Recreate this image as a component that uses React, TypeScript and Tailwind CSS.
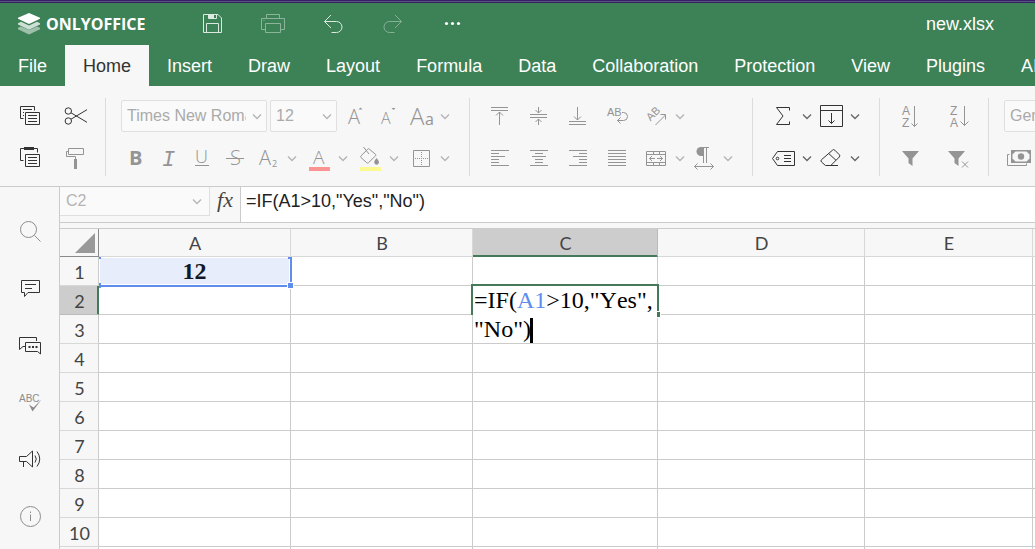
import type {ReactNode} from 'react'
import clsx from 'clsx'

const tabs = [
  'File',
  'Home',
  'Insert',
  'Draw',
  'Layout',
  'Formula',
  'Data',
  'Collaboration',
  'Protection',
  'View',
  'Plugins',
  'AI',
]

const columns = [
  {name: 'A', width: 'w-[192px]'},
  {name: 'B', width: 'w-[182px]'},
  {name: 'C', width: 'w-[185px]'},
  {name: 'D', width: 'w-[207px]'},
  {name: 'E', width: 'w-[168px]'},
  {name: 'F', width: ''},
]

const rows = [1, 2, 3, 4, 5, 6, 7, 8, 9, 10, 11]

type IconProps = {children: ReactNode; className?: string}

function Icon({children, className}: IconProps) {
  return (
    <svg
      viewBox="0 0 24 24"
      fill="none"
      stroke="currentColor"
      aria-hidden="true"
      className={clsx('block size-6 shrink-0 overflow-visible', className)}
    >
      {children}
    </svg>
  )
}

type GlyphProps = {
  x: number
  y: number
  size: number
  weight?: number
  font?: string
  children: string
}

function Glyph({x, y, size, weight = 300, font = 'Open Sans', children}: GlyphProps) {
  return (
    <text
      x={x}
      y={y}
      fontSize={size}
      fontWeight={weight}
      fontFamily={`"${font}", sans-serif`}
      fill="currentColor"
      stroke="none"
    >
      {children}
    </text>
  )
}

function Chevron({className}: {className?: string}) {
  return (
    <svg
      viewBox="0 0 12 12"
      fill="none"
      stroke="currentColor"
      strokeWidth="1.3"
      aria-hidden="true"
      className={clsx('block size-3 shrink-0', className)}
    >
      <path d="M2 4.5l4 4 4-4" />
    </svg>
  )
}

type ToolProps = {label: string; children: ReactNode; active?: boolean; menu?: boolean}

function Tool({label, children, active, menu}: ToolProps) {
  return (
    <button
      type="button"
      aria-label={label}
      title={label}
      className={clsx('flex shrink-0 items-center gap-1.5', active ? 'text-[#333]' : 'text-[#949494]')}
    >
      <Icon>{children}</Icon>
      {menu && <Chevron className={active ? 'text-[#666]' : 'text-[#b4b4b4]'} />}
    </button>
  )
}

function Group({children, className}: IconProps) {
  return (
    <div
      className={clsx(
        'flex h-[78px] shrink-0 flex-col justify-between border-r border-[#dcdcdc]',
        className,
      )}
    >
      {children}
    </div>
  )
}

function Row({children, className}: IconProps) {
  return <div className={clsx('flex h-9 items-center', className)}>{children}</div>
}

type ComboProps = {label: string; value: string; className: string}

function Combo({label, value, className}: ComboProps) {
  return (
    <div className={clsx('relative shrink-0', className)}>
      <select
        aria-label={label}
        defaultValue={value}
        className="h-8 w-full appearance-none rounded-xs border border-[#dfdfdf] bg-[#fafafa] pr-5 pl-[5px] text-base text-[#aaa]"
      >
        <option>{value}</option>
      </select>
      <Chevron className="absolute top-2.5 right-1 text-[#b4b4b4]" />
    </div>
  )
}

function AlignLines({lines}: {lines: [number, number][]}) {
  return (
    <>
      {lines.map(([from, to], i) => (
        <path key={i} d={`M${from} ${4.5 + i * 3}H${to}`} />
      ))}
    </>
  )
}

function Header() {
  return (
    <header className="shrink-0 bg-[#3d8157] font-['Liberation_Sans',Arial,sans-serif] text-lg text-white">
      <div className="h-[3px] border-y border-[#33245f] bg-[#5d4f8c]" />
      <div className="flex h-[42px] items-center pr-[41px] pl-[18px]">
        <div className="flex w-[183px] items-center gap-1.5">
          <svg viewBox="0 0 22 22" fill="white" aria-hidden="true" className="size-[22px]">
            <path d="M0 14.8l3-1.400 8 3.600 8-3.600 3 1.400v1.400L11 21.600 0 16.200z" opacity=".5" />
            <path d="M0 10.200L3 8.800l8 3.600 8-3.600 3 1.400v1.400l-11 5.200L0 11.600z" opacity=".75" />
            <path d="M11 0l11 4.800v1L11 11 0 5.800v-1z" />
          </svg>
          <span className="font-['Open_Sans',sans-serif] text-base font-bold">ONLYOFFICE</span>
        </div>
        <div className="flex gap-9">
          <button type="button" aria-label="Save">
            <Icon className="text-[#dbe9e0]">
              <path d="M2.5 2.5h14.5l3.5 3.5v14.5h-18z" />
              <path d="M7.5 2.5v4h8v-4M5.5 20.5v-9h12v9" />
              <path d="M8 2.5h5v3.5H8z" fill="currentColor" stroke="none" />
            </Icon>
          </button>
          <button type="button" aria-label="Print">
            <Icon className="text-[#8ab59a]">
              <path d="M5.5 6.5v-4h13v4M4.5 17.5h-4v-11h23v11h-4" />
              <path d="M4.5 11.5h15v9h-15zM2.5 8.5h1" />
            </Icon>
          </button>
          <button type="button" aria-label="Undo">
            <Icon className="text-[#dbe9e0]">
              <path d="M10 3L3.5 9.5 10 16M3.5 9.5h12a5.5 5.5 0 0 1 0 11h-5" />
            </Icon>
          </button>
          <button type="button" aria-label="Redo">
            <Icon className="text-[#85b196]">
              <path d="M14 3l6.5 6.5L14 16M20.5 9.5h-12a5.5 5.5 0 0 0 0 11h5" />
            </Icon>
          </button>
          <button type="button" aria-label="Customize quick access">
            <Icon>
              <g fill="currentColor" stroke="none">
                <circle cx="5.5" cy="11.5" r="1.6" />
                <circle cx="11.5" cy="11.5" r="1.6" />
                <circle cx="17.5" cy="11.5" r="1.6" />
              </g>
            </Icon>
          </button>
        </div>
        <span className="ml-auto">new.xlsx</span>
      </div>
      <nav className="flex h-[41px] overflow-hidden">
        {tabs.map((tab) => (
          <button
            key={tab}
            type="button"
            className={clsx('shrink-0 px-[18px]', tab === 'Home' && 'bg-[#f7f7f7] text-[#333]')}
          >
            {tab}
          </button>
        ))}
      </nav>
    </header>
  )
}

function Toolbar() {
  return (
    <div className="flex shrink-0 overflow-hidden border-b border-[#cbcbcb] bg-[#f7f7f7] pt-3 pb-2.5 font-['Liberation_Sans',Arial,sans-serif]">
      <Group className="pr-[17px] pl-[18px]">
        <Row className="gap-[22px]">
          <Tool label="Copy" active>
            <path d="M5.5 14.5h-3v-12h14v4M5 5.5h9M5 8.5h1M5 11.5h1M7.5 8.5h14v12h-14zM10 11.5h9M10 14.5h9M10 17.5h9" />
          </Tool>
          <Tool label="Cut" active>
            <circle cx="4.3" cy="7" r="3.2" />
            <circle cx="4.3" cy="17" r="3.2" />
            <path d="M7 8.8l16 9.5M7 15.2l16-9.5" />
          </Tool>
        </Row>
        <Row className="gap-[22px]">
          <Tool label="Paste" active>
            <path d="M5.5 14.5h-3v-12h17v4M7.5 8.5h14v12h-14zM10 11.5h9M10 14.5h9M10 17.5h9" />
            <path d="M6 1h10v3H6z" fill="currentColor" stroke="none" />
          </Tool>
          <Tool label="Copy style">
            <path d="M4.5 2.5h15v6h-15zM4.5 5.5h-2v5h9V13" />
            <path d="M10 13h3v10h-3z" fill="currentColor" stroke="none" />
          </Tool>
        </Row>
      </Group>

      <Group className="pr-[18px] pl-[15px]">
        <Row>
          <Combo label="Font" value="Times New Roman" className="w-[146px]" />
          <Combo label="Font size" value="12" className="ml-[3px] w-[67px]" />
          <div className="ml-1.5 flex gap-[9px]">
            <Tool label="Increment font size">
              <Glyph x={5} y={20} size={20}>A</Glyph>
              <path d="M15.5 5.5l2-2 2 2z" fill="currentColor" stroke="none" />
            </Tool>
            <Tool label="Decrement font size">
              <Glyph x={5} y={20} size={16}>A</Glyph>
              <path d="M15.5 4l2 2 2-2z" fill="currentColor" stroke="none" />
            </Tool>
            <Tool label="Change case" menu>
              <Glyph x={1} y={21} size={24}>A</Glyph>
              <Glyph x={16} y={21} size={16} weight={400}>a</Glyph>
            </Tool>
          </div>
        </Row>
        <Row className="gap-[9px] pl-[3px]">
          <Tool label="Bold">
            <Glyph x={5} y={19} size={20} weight={700}>B</Glyph>
          </Tool>
          <Tool label="Italic">
            <text
              x="5"
              y="20"
              fontSize="22"
              fontStyle="italic"
              fontFamily='"Liberation Mono", monospace'
              fill="currentColor"
              stroke="none"
            >
              I
            </text>
          </Tool>
          <Tool label="Underline">
            <Glyph x={5} y={17} size={18}>U</Glyph>
            <path d="M5 19.5h14" />
          </Tool>
          <Tool label="Strikeout">
            <Glyph x={7} y={19} size={20}>S</Glyph>
            <path d="M3 12.5h18" />
          </Tool>
          <Tool label="Subscript" menu>
            <Glyph x={3} y={19} size={20}>A</Glyph>
            <Glyph x={16} y={21} size={9} weight={400}>2</Glyph>
          </Tool>
          <Tool label="Font color" menu>
            <Glyph x={6} y={18} size={19}>A</Glyph>
            <path d="M2 21h21v4H2z" fill="#fd9494" stroke="none" />
          </Tool>
          <Tool label="Fill color" menu>
            <path d="M9.8 3.2a1 1 0 0 1 1.6 0l6.2 5.2a1 1 0 0 1 0 1.4l-7 6.8a1.4 1.4 0 0 1-2 0l-5.6-5a1.4 1.4 0 0 1 0-1.8z" />
            <path d="M5.5 1l5.5 7" />
            <path d="M18.5 12c1.5 2 2.5 3 2.5 4.3a2.4 2.4 0 0 1-4.800 0c0-1.300 1-2.300 2.300-4.300z" fill="currentColor" stroke="none" />
            <path d="M2 21h21v4H2z" fill="#fbf98f" stroke="none" />
          </Tool>
          <Tool label="Borders" menu>
            <path d="M4.5 4.5h16v16h-16z" />
            <path d="M12.5 6v14M6 12.5h14" strokeDasharray="1 1" />
          </Tool>
        </Row>
      </Group>

      <Group className="px-[18px]">
        <Row className="gap-[15px]">
          <Tool label="Align top">
            <path d="M3 3.5h17M3 6.5h17M11.5 8v13M8 11.5L11.5 8l3.5 3.5" />
          </Tool>
          <Tool label="Align middle">
            <path d="M3 10.5h17M3 13.5h17M11.5 3v6M8.5 6l3 3 3-3M11.5 21v-6M8.5 18l3-3 3 3" />
          </Tool>
          <Tool label="Align bottom">
            <path d="M3 17.5h17M3 20.5h17M11.5 3v13M8 12.5l3.5 3.5 3.5-3.5" />
          </Tool>
          <Tool label="Wrap text">
            <Glyph x={2} y={12} size={11} weight={400} font="Liberation Sans">AB</Glyph>
            <path d="M17 8.5h1.500a4 4 0 0 1 0 8h-6M15.500 13.500l-3 3 3 3" />
          </Tool>
          <Tool label="Orientation" menu>
            <g transform="rotate(-45 8 16)">
              <Glyph x={6} y={16} size={11} weight={400} font="Liberation Sans">AB</Glyph>
            </g>
            <path d="M11.5 21L21.5 11M16.5 10.5h5v5" />
          </Tool>
        </Row>
        <Row className="gap-[15px]">
          <Tool label="Align left">
            <AlignLines lines={[[3, 21], [3, 11], [3, 17], [3, 11], [3, 11], [3, 21]]} />
          </Tool>
          <Tool label="Align center">
            <AlignLines lines={[[3, 21], [8, 16], [5, 19], [8, 16], [8, 16], [3, 21]]} />
          </Tool>
          <Tool label="Align right">
            <AlignLines lines={[[3, 21], [13, 21], [7, 21], [13, 21], [13, 21], [3, 21]]} />
          </Tool>
          <Tool label="Justify">
            <AlignLines lines={[[3, 21], [3, 21], [3, 21], [3, 21], [3, 21], [3, 21]]} />
          </Tool>
          <div className="flex gap-1.5">
            <Tool label="Merge and center" menu>
              <path d="M2.5 5.5h19v14h-19zM2.5 8.5h19M2.5 16.5h19M9.5 5v3M15.5 5v3M9.5 17v2M15.5 17v2" />
              <path d="M11 12.5H5.5M8 10l-2.5 2.5L8 15M13 12.5h5.5M16 10l2.5 2.5L16 15" />
            </Tool>
            <Tool label="Text direction" menu>
              <path d="M17 1.5H9M11.5 2v15M14.5 2v15M2.5 20.5h19M5.5 17.5l-3 3 3 3M18.5 17.5l3 3-3 3" />
              <path d="M11 1v9H9a4.5 4.5 0 0 1 0-9z" fill="currentColor" stroke="none" />
            </Tool>
          </div>
        </Row>
      </Group>

      <Group className="px-[18px]">
        <Row className="gap-1.5">
          <Tool label="Summation" active menu>
            <path d="M18.5 6.5v-3h-13L12 12l-6.5 8.5h13v-3" />
          </Tool>
          <Tool label="Fill" active menu>
            <path d="M1.5 1.5h22v21h-22zM1.5 6.5h22M12.5 9v10.5M9.5 16.5l3 3 3-3" />
          </Tool>
        </Row>
        <Row className="gap-1.5">
          <Tool label="Named ranges" active menu>
            <path d="M6.5 5.5h17v14h-17l-5-7zM13 9.5h7M13 12.5h7M13 15.5h7" />
            <circle cx="6.5" cy="12.5" r="1.3" />
          </Tool>
          <Tool label="Clear" active menu>
            <path d="M13.5 4.2a1.6 1.6 0 0 1 2.3 0l4.500 4.500a1.600 1.600 0 0 1 0 2.300l-8.500 8.500H6.500l-4-3.500a1.600 1.600 0 0 1 0-2.300zM10 7.800l7 6.500M11.500 19.500H19" />
          </Tool>
        </Row>
      </Group>

      <Group className="pr-[17px] pl-[18px]">
        <Row className="gap-[25px]">
          <Tool label="Sort ascending">
            <Glyph x={4} y={11} size={12} weight={400} font="Liberation Sans">A</Glyph>
            <Glyph x={4} y={23} size={12} weight={400} font="Liberation Sans">Z</Glyph>
            <path d="M16.5 2v20.5M13.5 19.5l3 3 3-3" />
          </Tool>
          <Tool label="Sort descending">
            <Glyph x={3} y={11} size={12} weight={400} font="Liberation Sans">Z</Glyph>
            <Glyph x={3} y={23} size={12} weight={400} font="Liberation Sans">A</Glyph>
            <path d="M17.5 2v19.5M13.5 17.5l4 4 4-4" />
          </Tool>
        </Row>
        <Row className="gap-[25px]">
          <Tool label="Filter">
            <path d="M4 5h17l-6.5 7.5V20l-4-3v-4.5z" fill="currentColor" stroke="none" />
          </Tool>
          <Tool label="Clear filter">
            <path d="M1 5h17l-6.5 7.5V20l-4-3v-4.5z" fill="currentColor" stroke="none" />
            <path d="M15 15.5l6 6M21 15.5l-6 6" />
          </Tool>
        </Row>
      </Group>

      <div className="flex h-[78px] shrink-0 flex-col justify-between pl-[15px]">
        <Row>
          <Combo label="Number format" value="General" className="w-[120px]" />
        </Row>
        <Row className="pl-[3px]">
          <Tool label="Accounting style">
            <path d="M2.5 8.5h-2v11h19v-2" />
            <path d="M4 4h20v13H4z" fill="currentColor" stroke="none" />
            <path d="M8.5 5.5h11l3 3v4l-3 3h-11l-3-3v-4z" fill="#f7f7f7" stroke="none" />
            <circle cx="14" cy="10.5" r="3.2" fill="currentColor" stroke="none" />
          </Tool>
        </Row>
      </div>
    </div>
  )
}

function SideButton({label, children, muted}: {label: string; children: ReactNode; muted?: boolean}) {
  return (
    <button type="button" aria-label={label} className={muted ? 'text-[#8c8c8c]' : 'text-[#333]'}>
      <Icon>{children}</Icon>
    </button>
  )
}

function Sidebar() {
  return (
    <aside className="flex w-[60px] shrink-0 flex-col items-center gap-[33px] border-r border-[#cbcbcb] bg-[#f7f7f7] pt-8">
      <SideButton label="Find" muted>
        <circle cx="10.5" cy="10.5" r="8" />
        <path d="M16.5 16.5l6 6" />
      </SideButton>
      <SideButton label="Comments">
        <path d="M3.5 4.5h18v12H10l-3.5 4v-4h-3zM7 8.5h11M7 12.5h7" />
      </SideButton>
      <SideButton label="Chat">
        <path d="M18.5 8v-3.500h-17v12l3.500-3h2" />
        <path d="M7.500 9.500h15v11.500l-3-2.500h-12z" />
        <path d="M10.500 14h2M14 14h2M17.500 14h2" strokeWidth="2" />
      </SideButton>
      <SideButton label="Spell checking" muted>
        <Glyph x={1} y={12} size={10} weight={400} font="Liberation Sans">ABC</Glyph>
        <path d="M11 14.500l4.500 3 8-8-9 12z" fill="currentColor" stroke="none" />
      </SideButton>
      <SideButton label="Feedback and support">
        <path d="M1.5 9.5h7l6-5.5v16l-6-5.5h-7zM5.500 14.500v5.500M14.500 4v16" />
        <path d="M17 8.500q2.500 3.500 0 7M19 4.500q5.500 7.500 0 15" />
      </SideButton>
      <SideButton label="About" muted>
        <circle cx="12.5" cy="12.5" r="10" />
        <path d="M12.500 10.500V17M12.500 7.500V9" />
      </SideButton>
    </aside>
  )
}

function FormulaBar() {
  return (
    <div className="flex h-9 shrink-0 border-b border-[#cbcbcb] bg-[#f7f7f7] font-['Liberation_Sans',Arial,sans-serif]">
      <div className="relative h-[29px] w-[150px] shrink-0 border-r border-b border-[#dfdfdf] bg-[#fafafa]">
        <input
          aria-label="Cell name"
          defaultValue="C2"
          className="h-full w-full bg-transparent pr-5 pl-1.5 text-base text-[#b4b4b4] outline-none"
        />
        <Chevron className="absolute top-2 right-1.5 text-[#b4b4b4]" />
      </div>
      <button
        type="button"
        aria-label="Insert function"
        className="h-[29px] w-[30px] shrink-0 pb-1 font-['Liberation_Serif',serif] text-[22px] leading-6 text-[#444] italic"
      >
        fx
      </button>
      <input
        aria-label="Formula"
        defaultValue={'=IF(A1>10,"Yes","No")'}
        className="h-full min-w-0 flex-1 border-l border-[#cbcbcb] bg-white pb-[7px] pl-[5px] text-lg text-[#222] outline-none"
      />
    </div>
  )
}

function ReferencedCell() {
  return (
    <div className="absolute inset-0 flex items-center justify-center font-['Liberation_Serif',serif] text-2xl font-bold text-[#111827]">
      <div className="absolute inset-x-px top-px bottom-px bg-[#e7edfb]" />
      <div className="absolute top-0 -right-0.5 -bottom-0.5 left-0.5 border-r-2 border-b-2 border-[#5f8dee]" />
      <div className="absolute top-0 left-0 h-0.5 w-0.5 bg-[#5f8dee]" />
      <div className="absolute top-0 -right-0.5 h-0.5 w-1 bg-[#5f8dee]" />
      <div className="absolute -bottom-[3px] left-0 h-[5px] w-0.5 bg-[#5f8dee]" />
      <div className="absolute -right-1 -bottom-1 z-10 size-[7px] border border-white bg-[#5f8dee]" />
      <span className="relative leading-none">12</span>
    </div>
  )
}

function CellEditor() {
  return (
    <div className="absolute -top-0.5 -left-0.5 z-10 h-[59px] w-[188px] font-['Liberation_Serif',serif] text-2xl text-black [font-kerning:none]">
      <div className="absolute inset-x-0 top-0 h-[31px] border-2 border-b-0 border-[#44795a]" />
      <div
        role="textbox"
        aria-label="Cell editor"
        className="absolute inset-x-0.5 top-0.5 bottom-0 overflow-hidden bg-white pl-px leading-[29px] whitespace-nowrap"
      >
        =IF(<span className="text-[#5f8dee]">A1</span>&gt;10,"Yes",
        <br />
        "No")
        <span className="-ml-px inline-block h-[27px] w-[3px] bg-black align-middle" />
      </div>
      <div className="absolute top-[27px] -right-0.5 h-[7px] w-[5px] border border-white bg-[#44795a]" />
    </div>
  )
}

function Sheet() {
  return (
    <div className="mt-[5px] min-h-0 flex-1 overflow-hidden border-t border-[#cbcbcb] bg-white">
      <table className="w-full min-w-[1040px] table-fixed border-separate border-spacing-0 font-[Lato,sans-serif] text-lg text-[#444]">
        <thead>
          <tr>
            <th className="relative h-7 w-[39px] border-r border-b border-[#8a8a8a] bg-[#f7f7f7] p-0">
              <svg viewBox="0 0 20 20" aria-hidden="true" className="absolute right-[3px] bottom-[3px] size-5">
                <path d="M20 0v20H0z" fill="#999" />
              </svg>
            </th>
            {columns.map((column) => (
              <th
                key={column.name}
                scope="col"
                className={clsx(
                  'h-7 border-r border-b p-0 pl-px font-normal leading-none',
                  column.width,
                  column.name === 'C'
                    ? 'border-r-[#bbb] border-b-[#44795a] bg-[#cdcdcd] shadow-[inset_0_-1px_0_#44795a]'
                    : 'border-[#d8d8d8] bg-[#f7f7f7]',
                )}
              >
                {column.name}
              </th>
            ))}
          </tr>
        </thead>
        <tbody>
          {rows.map((row) => (
            <tr key={row}>
              <th
                scope="row"
                className={clsx(
                  'h-[29px] border-r border-b p-0 pt-px pl-px font-normal leading-none',
                  row === 2
                    ? 'border-r-[#44795a] border-b-[#bbb] bg-[#cdcdcd] shadow-[inset_-1px_0_0_#44795a]'
                    : 'border-r-[#cbcbcb] border-b-[#d8d8d8] bg-[#f7f7f7]',
                )}
              >
                {row}
              </th>
              {columns.map((column) => (
                <td key={column.name} className="relative h-[29px] border-r border-b border-[#cbcbcb] p-0">
                  {row === 1 && column.name === 'A' && <ReferencedCell />}
                  {row === 2 && column.name === 'C' && <CellEditor />}
                </td>
              ))}
            </tr>
          ))}
        </tbody>
      </table>
    </div>
  )
}

export default function App() {
  return (
    <div className="flex h-screen flex-col overflow-hidden bg-[#f7f7f7]">
      <Header />
      <Toolbar />
      <div className="flex min-h-0 flex-1">
        <Sidebar />
        <main className="flex min-w-0 flex-1 flex-col">
          <FormulaBar />
          <Sheet />
        </main>
      </div>
    </div>
  )
}
